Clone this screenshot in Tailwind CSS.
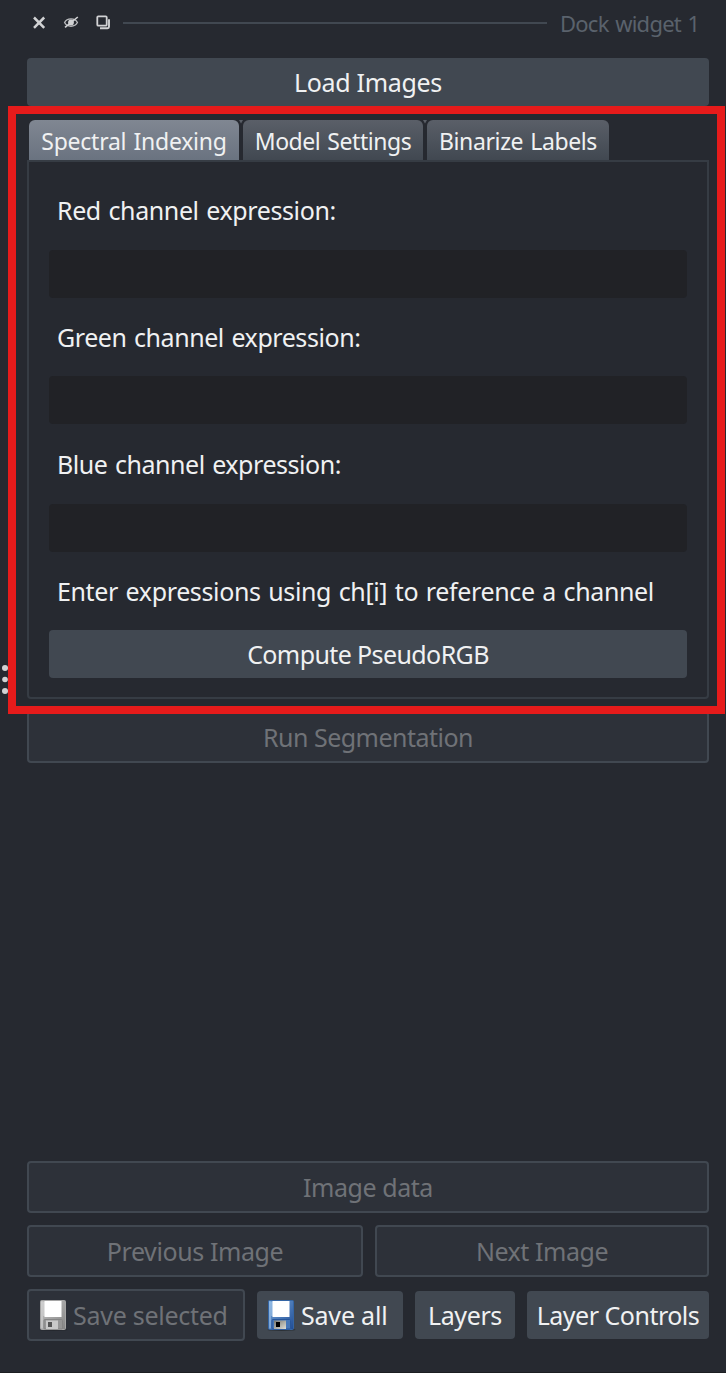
<!DOCTYPE html>
<html lang="en">
<head>
<meta charset="utf-8">
<title>Dock widget 1</title>
<script src="https://cdn.jsdelivr.net/npm/@tailwindcss/browser@4"></script>
</head>
<body class="relative flex h-[1373px] w-[726px] flex-col overflow-hidden border-b border-[#1c1e22] bg-[#262930] pl-[27px] pr-[17px] font-['Noto_Sans',sans-serif] text-[25px] leading-[34px] whitespace-nowrap text-[#f0f1f2] [word-spacing:1.5px]">

  <!-- Title bar -->
  <header class="flex h-[46px] items-center">
    <svg class="ml-[5px] h-4 w-[80px] shrink-0" viewBox="0 0 80 16" fill="none" stroke="#d1d2d4">
      <path d="M2 2.5L12.2 12.8M12.2 2.5L2 12.8" stroke-width="2.5"/>
      <path d="M32.6 7.5C35 2.6 43 2.6 45.4 7.5C43 12.4 35 12.4 32.6 7.5Z" stroke-width="1.4" stroke="#b9babd"/>
      <circle cx="39" cy="7.4" r="2.9" fill="#d1d2d4" stroke="none"/>
      <path d="M33 12.4L45.8 2" stroke-width="1.6"/>
      <rect x="65.3" y="1.3" width="9.4" height="9.4" rx="1" stroke-width="1.8"/>
      <path d="M77 4.2V11.8Q77 13.2 75.6 13.2H68" stroke-width="1.9"/>
    </svg>
    <div class="ml-[11px] h-[2px] w-[424px] bg-[#414851]"></div>
    <span class="ml-[13px] text-[22px] tracking-[-0.75px] text-[#5a626c]">Dock widget 1</span>
  </header>

  <button class="mt-3 h-12 shrink-0 rounded-[4px] bg-[#414851] tracking-[-0.32px]">Load Images</button>

  <!-- Tabs -->
  <nav class="mt-[14px] flex h-10 shrink-0 pl-[2px] text-[23px]">
    <div class="w-[210px] rounded-t-[6px] bg-linear-to-b from-[#808792] to-[#6a7380] pt-1 text-center tracking-[-0.25px]">Spectral Indexing</div>
    <svg class="h-1 w-1" viewBox="0 0 4 4"><path d="M0 0H4L2 3.5Z" fill="#5a5f67"/></svg>
    <div class="w-[180px] rounded-t-[6px] bg-linear-to-b from-[#5a5f68] to-[#414851] pt-1 text-center tracking-[-0.45px]">Model Settings</div>
    <svg class="h-1 w-1" viewBox="0 0 4 4"><path d="M0 0H4L2 3.5Z" fill="#5a5f67"/></svg>
    <div class="w-[182px] rounded-t-[6px] bg-linear-to-b from-[#5a5f68] to-[#414851] pt-1 text-center tracking-[-0.38px]">Binarize Labels</div>
  </nav>
  <main class="flex h-[539px] shrink-0 flex-col rounded-b-[4px] border-2 border-[#363c44] px-5 pt-[31px]">
    <label class="pl-2 tracking-[-0.39px]">Red channel expression:</label>
    <div class="mt-[23px] h-12 rounded-[4px] bg-[#212226]"></div>
    <label class="mt-[22px] pl-2 tracking-[-0.44px]">Green channel expression:</label>
    <div class="mt-[22px] h-12 rounded-[4px] bg-[#212226]"></div>
    <label class="mt-[23px] pl-2 tracking-[-0.46px]">Blue channel expression:</label>
    <div class="mt-[23px] h-12 rounded-[4px] bg-[#212226]"></div>
    <p class="mt-[22px] pl-2 tracking-[-0.37px]">Enter expressions using ch[i] to reference a channel</p>
    <button class="mt-[22px] h-12 rounded-[4px] bg-[#414851] tracking-[-0.6px]">Compute PseudoRGB</button>
  </main>

  <button class="mt-3 h-[52px] shrink-0 rounded-[4px] border-2 border-[#414851] bg-[#2d3139] tracking-[-0.52px] text-[#6f7277]">Run Segmentation</button>

  <!-- Bottom controls -->
  <footer class="mt-auto mb-[31px] flex flex-col gap-3 text-[#6f7277]">
    <button class="h-[52px] rounded-[4px] border-2 border-[#414851] bg-[#2d3139] tracking-[-0.45px]">Image data</button>
    <div class="flex gap-3">
      <button class="h-[52px] w-[336px] rounded-[4px] border-2 border-[#414851] bg-[#2d3139] tracking-[-0.4px]">Previous Image</button>
      <button class="h-[52px] w-[334px] rounded-[4px] border-2 border-[#414851] bg-[#2d3139] tracking-[-0.45px]">Next Image</button>
    </div>
    <div class="flex items-center gap-3">
      <button class="flex h-[52px] w-[218px] items-center rounded-[4px] border-2 border-[#414851] bg-[#2d3139] pl-[9px]">
        <svg class="mr-[3px] h-8 w-8 shrink-0" viewBox="0 0 32 32">
          <defs><linearGradient id="g1" x1="0" y1="0" x2="1" y2="1"><stop offset="0" stop-color="#c4c4c4"/><stop offset="1" stop-color="#858585"/></linearGradient></defs>
          <ellipse cx="15.5" cy="30.7" rx="14" ry="1.2" fill="#25282e"/>
          <rect x="2.5" y="1.5" width="25" height="29" rx="1" fill="url(#g1)" stroke="#a5a5a5"/>
          <path d="M4 2.5V29.5M6 3V17" stroke="#dcdcdc" fill="none"/>
          <rect x="6.5" y="2" width="17" height="16" fill="#fff"/>
          <rect x="6" y="20.5" width="18.5" height="9.5" rx="1" fill="#969696" stroke="#858585"/>
          <rect x="8" y="21.5" width="12" height="8.5" fill="#c9c9c9"/>
          <rect x="10" y="23" width="4" height="5" fill="#555"/>
        </svg>
        <span class="tracking-[-0.27px]">Save selected</span>
      </button>
      <button class="flex h-12 w-[146px] items-center rounded-[4px] bg-[#414851] pl-[9px] text-[#f0f1f2]">
        <svg class="mr-[3px] h-8 w-8 shrink-0" viewBox="0 0 32 32">
          <defs><linearGradient id="g2" x1="0" y1="0" x2="1" y2="1"><stop offset="0" stop-color="#79a9dc"/><stop offset="1" stop-color="#1f4c95"/></linearGradient>
          <linearGradient id="g3" x1="0" y1="0" x2="1" y2="1"><stop offset="0" stop-color="#75756e"/><stop offset="1" stop-color="#e0e0d8"/></linearGradient></defs>
          <ellipse cx="15.5" cy="30.7" rx="14" ry="1.2" fill="#2b3036"/>
          <rect x="2.5" y="1.5" width="25" height="29" rx="1" fill="url(#g2)" stroke="#3465a4"/>
          <path d="M4 2.5V29.5M6 3V17" stroke="#a9cbed" fill="none"/>
          <rect x="6.5" y="2" width="17" height="16" fill="#fff"/>
          <rect x="6" y="20.5" width="18.5" height="9.5" rx="1" fill="#4677b8" stroke="#28569a"/>
          <rect x="8" y="21.5" width="12" height="8.5" fill="url(#g3)"/>
          <rect x="10" y="23" width="4" height="5" fill="#000"/>
        </svg>
        <span class="tracking-[-0.19px]">Save all</span>
      </button>
      <button class="h-12 w-[100px] rounded-[4px] bg-[#414851] tracking-[-0.4px] text-[#f0f1f2]">Layers</button>
      <button class="h-12 w-[182px] rounded-[4px] bg-[#414851] tracking-[-0.5px] text-[#f0f1f2]">Layer Controls</button>
    </div>
  </footer>

  <!-- Splitter handle and highlight frame laid over the dock -->
  <svg class="absolute top-[664px] left-0 h-8 w-[10px]" viewBox="0 0 10 32" fill="#d1d2d4"><circle cx="5" cy="4" r="3"/><circle cx="5" cy="15.5" r="2.8"/><circle cx="5" cy="27" r="3"/></svg>
  <div class="pointer-events-none absolute top-[106px] left-[8px] h-[608px] w-[717px] border-8 border-[#e61b1b]"></div>
</body>
</html>
